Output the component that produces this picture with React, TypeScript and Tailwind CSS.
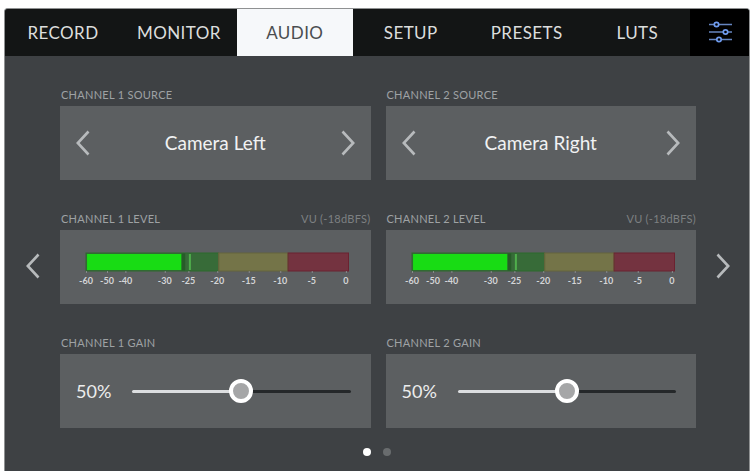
// src/App.tsx
import { useState } from "react";
import clsx from "clsx";

const TABS = [
  { name: "RECORD", size: "flex-[11]" },
  { name: "MONITOR", size: "flex-[11]" },
  { name: "AUDIO", size: "flex-[11]" },
  { name: "SETUP", size: "flex-[11]" },
  { name: "PRESETS", size: "flex-[11]" },
  { name: "LUTS", size: "flex-[10]" },
];

const SOURCES = ["Camera Left", "Camera Right", "Camera Mono", "XLR Left", "XLR Right"];

// The dB scale is not linear, so every mark keeps its own position in %
const MARKS = [
  { db: "-60", at: 0 },
  { db: "-50", at: 8 },
  { db: "-40", at: 15 },
  { db: "-30", at: 30 },
  { db: "-25", at: 39 },
  { db: "-20", at: 50 },
  { db: "-15", at: 62 },
  { db: "-10", at: 74 },
  { db: "-5", at: 86 },
  { db: "0", at: 99 },
];

const Chevron = ({ right = false }: { right?: boolean }) => (
  <svg width="14" height="26" viewBox="0 0 14 26" fill="none" stroke="#b7babc" strokeWidth="2.6">
    <path d={right ? "M1.5 1.5 12.2 13 1.5 24.5" : "M12.5 1.5 1.8 13 12.5 24.5"} />
  </svg>
);

interface PanelProps {
  label: string;
  note?: string;
  htmlFor?: string;
  children: React.ReactNode;
}

const Panel = ({ label, note, htmlFor, children }: PanelProps) => (
  <div className="min-w-0">
    <div className="mb-1 flex justify-between pl-px text-[11px] leading-[14px] tracking-wide text-[#9fa2a4]">
      {htmlFor ? <label htmlFor={htmlFor}>{label}</label> : <span>{label}</span>}
      {note && <span className="text-[#7d8082]">{note}</span>}
    </div>
    <div className="flex h-[74px] items-center bg-[#5c5f61]">{children}</div>
  </div>
);

const SourcePanel = ({ channel, initial }: { channel: number; initial: number }) => {
  const [index, setIndex] = useState(initial);
  const step = (by: number) => setIndex((index + by + SOURCES.length) % SOURCES.length);

  return (
    <Panel label={`CHANNEL ${channel} SOURCE`}>
      <div className="flex w-full items-center justify-between px-4">
        <button aria-label="Previous source" onClick={() => step(-1)}>
          <Chevron />
        </button>
        <span className="text-[19px] leading-6 text-[#f1f2f3]">{SOURCES[index]}</span>
        <button aria-label="Next source" onClick={() => step(1)}>
          <Chevron right />
        </button>
      </div>
    </Panel>
  );
};

const LevelPanel = ({ channel }: { channel: number }) => (
  <Panel label={`CHANNEL ${channel} LEVEL`} note="VU (-18dBFS)">
    <div className="w-full pt-2 pr-[22px] pl-[26px]">
      <svg className="block h-9 w-full overflow-visible" role="img" aria-label={`Channel ${channel} level`}>
        <rect x="0" y="0" width="50.5%" height="18" fill="#376b38" />
        <rect x="50.5%" y="0" width="26.5%" height="18" fill="#747448" />
        <rect x="77%" y="0" width="23%" height="18" fill="#743340" />
        <rect x="0.4%" y="1" width="36%" height="16" fill="#18dc14" />
        <rect x="36.4%" y="0" width="1.4%" height="18" fill="#275c28" />
        <rect x="39.2%" y="1" width="2" height="16" fill="#4fae4c" />
        <rect x="0" y="0" width="50.5%" height="18" fill="none" stroke="#2c6a2c" />
        <rect x="50.5%" y="0" width="26.5%" height="18" fill="none" stroke="#65643c" />
        <rect x="77%" y="0" width="23%" height="18" fill="none" stroke="#6b2230" />
        {MARKS.map((m) => (
          <g key={m.db}>
            <rect x={`${m.at}%`} y="18" width="1" height="2" fill="#85888a" />
            <text x={`${m.at}%`} y="31" textAnchor="middle" fontSize="9" fontWeight="700" fill="#d4d5d7">
              {m.db}
            </text>
          </g>
        ))}
      </svg>
    </div>
  </Panel>
);

const GainPanel = ({ channel }: { channel: number }) => {
  const [gain, setGain] = useState(50);
  const id = `gain-${channel}`;

  return (
    <Panel label={`CHANNEL ${channel} GAIN`} htmlFor={id}>
      <div className="flex w-full items-center pr-5 pl-4">
        <span className="w-14 shrink-0 text-[18px] leading-6 text-[#eceded]">{gain}%</span>
        <input
          id={id}
          type="range"
          min={0}
          max={100}
          value={gain}
          onChange={(e) => setGain(Number(e.target.value))}
          style={{
            backgroundImage: `linear-gradient(to right, #dcdee0 ${gain}%, #25282a ${gain}%)`,
          }}
          className="h-[3px] min-w-0 flex-1 cursor-pointer appearance-none rounded-full [&::-webkit-slider-thumb]:size-6 [&::-webkit-slider-thumb]:appearance-none [&::-webkit-slider-thumb]:rounded-full [&::-webkit-slider-thumb]:border-4 [&::-webkit-slider-thumb]:border-solid [&::-webkit-slider-thumb]:border-white [&::-webkit-slider-thumb]:bg-[#a5a6a7]"
        />
      </div>
    </Panel>
  );
};

const SlidersIcon = () => (
  <svg width="24" height="24" viewBox="0 0 24 24" fill="#000" strokeWidth="1.7">
    <path d="M1 3.5h23M1 11h23M1 18.5h23" stroke="#6585c0" />
    <circle cx="8.5" cy="3.5" r="2.2" stroke="#6f9bee" />
    <circle cx="17.5" cy="11" r="2.2" stroke="#6f9bee" />
    <circle cx="11" cy="18.5" r="2.2" stroke="#6f9bee" />
  </svg>
);

const App = () => {
  const [tab, setTab] = useState("AUDIO");

  return (
    <div className="flex min-h-screen flex-col bg-white pt-2 pr-px pl-1 font-['Lato',sans-serif]">
      <div className="flex flex-1 flex-col overflow-hidden rounded-t-sm border border-b-0 border-[#8f9192] bg-[#3e4144]">
        <nav className="flex h-[47px] bg-[#131515]">
          {TABS.map((t) => (
            <button
              key={t.name}
              onClick={() => setTab(t.name)}
              className={clsx(
                "text-[17px] tracking-wide",
                t.size,
                t.name === tab ? "bg-[#f6f8fa] text-[#4a4d50]" : "text-[#dcdedd]"
              )}
            >
              {t.name}
            </button>
          ))}
          <button aria-label="Settings" className="flex w-[59px] items-center justify-center bg-black">
            <SlidersIcon />
          </button>
        </nav>

        <div className="flex">
          <button aria-label="Previous page" className="flex w-[55px] shrink-0 items-center justify-center pt-12">
            <Chevron />
          </button>
          <main className="grid flex-1 grid-cols-2 gap-x-[15px] gap-y-8 pt-8">
            <SourcePanel channel={1} initial={0} />
            <SourcePanel channel={2} initial={1} />
            <LevelPanel channel={1} />
            <LevelPanel channel={2} />
            <GainPanel channel={1} />
            <GainPanel channel={2} />
          </main>
          <button aria-label="Next page" className="flex w-[53px] shrink-0 items-center justify-center pt-12">
            <Chevron right />
          </button>
        </div>

        <div className="flex justify-center gap-3 pt-5 pb-3">
          <span className="size-2 rounded-full bg-white" />
          <span className="size-2 rounded-full bg-[#696c6e]" />
        </div>
      </div>
    </div>
  );
};

export default App;
